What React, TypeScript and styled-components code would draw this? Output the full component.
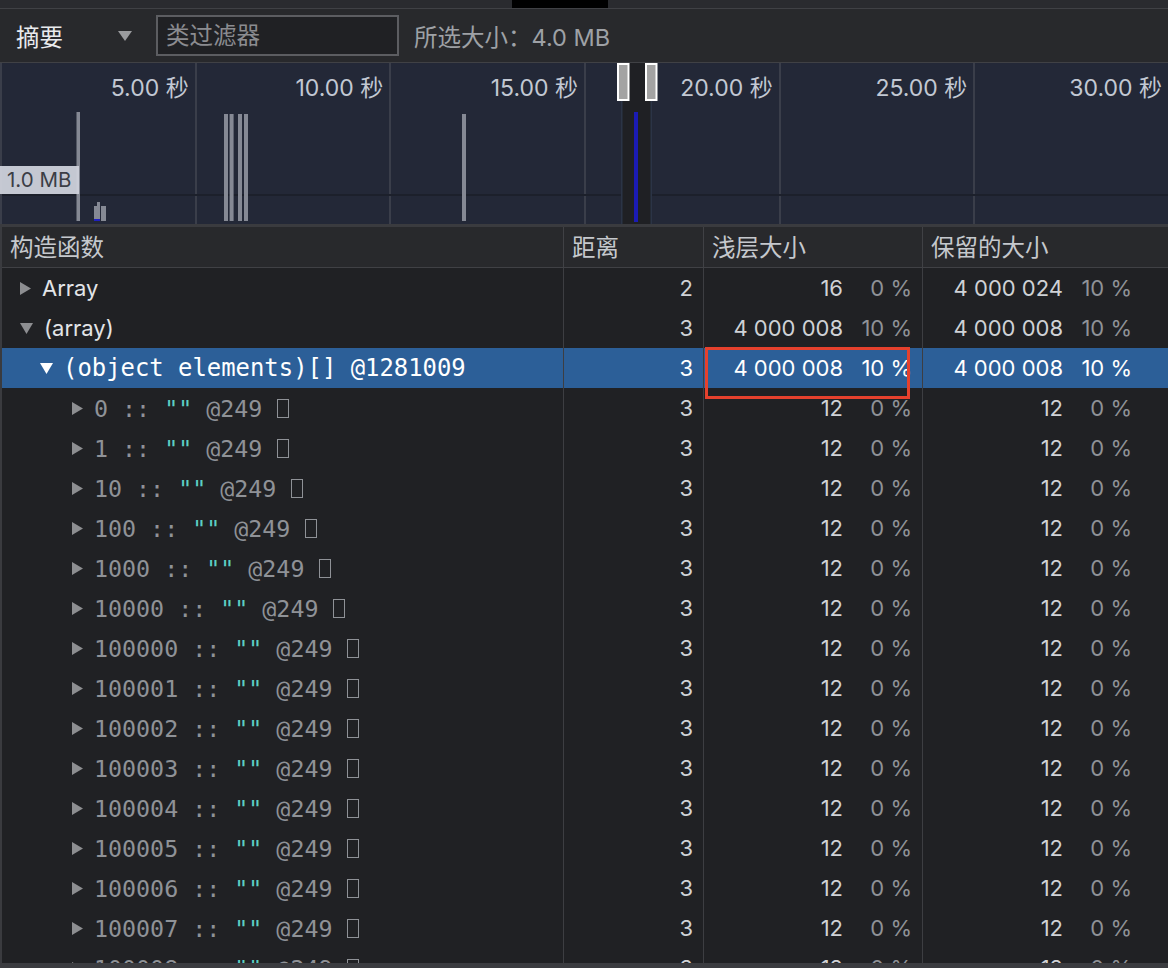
import React from 'react';
import styled, { createGlobalStyle } from 'styled-components';

const GlobalStyle = createGlobalStyle`
  html, body { margin: 0; padding: 0; background: #202124; }
  #root { width: 1168px; height: 968px; }
  * { box-sizing: border-box; }
`;

const SANS = `Inter, "Noto Sans CJK SC", sans-serif`;
const MONO = `"DejaVu Sans Mono", "Liberation Mono", monospace`;

const Page = styled.div`
  width: 1168px;
  height: 968px;
  display: flex;
  flex-direction: column;
  overflow: hidden;
  background: #202124;
  font-family: ${SANS};
`;

const TopStrip = styled.div`
  flex: none;
  height: 9px;
  background: #2a2b2f;
  border-bottom: 1px solid #404145;
  display: flex;
  padding-left: 512px;
`;

const BlackTab = styled.div`
  width: 96px;
  background: #000;
`;

const Toolbar = styled.div`
  flex: none;
  height: 54px;
  display: flex;
  align-items: center;
  padding-left: 16px;
  background: #28292c;
  border-bottom: 1px solid #404145;
`;

const SelectLabel = styled.span`
  font-size: 23.5px;
  color: #e8eaed;
  width: 102px;
`;

const Caret = styled.svg`
  width: 14px;
  height: 10px;
  flex: none;
`;

const FilterInput = styled.input`
  margin-left: 24px;
  width: 243px;
  height: 41px;
  border: 2px solid #5c5d61;
  background: #202124;
  padding: 0 0 0 8px;
  font-family: ${SANS};
  font-size: 23.5px;
  color: #e8eaed;
  outline: none;
  &::placeholder { color: #8b8c90; }
`;

const SizeLabel = styled.span`
  margin-left: 15px;
  font-size: 23.5px;
  color: #9ea1a6;
`;

const Timeline = styled.div`
  flex: none;
  position: relative;
  height: 161px;
  background: #232837;
  display: grid;
  grid-template-columns: repeat(6, 1fr);
  border-bottom: 3px solid #3a3b3f;
  box-sizing: content-box;
`;

const TickCell = styled.div`
  border-left: 2px solid #3a3e4a;
  text-align: right;
  padding: 12px 6px 0 0;
  font-size: 23px;
  line-height: 26px;
  color: #c2c8d3;
`;

const ChartLayer = styled.svg`
  position: absolute;
  left: 0;
  top: 0;
  width: 1168px;
  height: 161px;
`;

const ScaleTag = styled.div`
  position: absolute;
  left: 0;
  top: 103px;
  width: 79px;
  height: 28px;
  padding-left: 7px;
  background: rgba(206, 209, 218, 0.95);
  color: #3b3e46;
  font-size: 20.5px;
  line-height: 28px;
  white-space: nowrap;
`;

const Table = styled.div`
  flex: 1;
  position: relative;
  display: flex;
  flex-direction: column;
  overflow: hidden;
  border-left: 2px solid #3a3b3f;
  background: #202124;
`;

const COLS = `561px 140px 219px 1fr`;

const HeaderRow = styled.div`
  flex: none;
  height: 41px;
  display: grid;
  grid-template-columns: ${COLS};
  background: #28292c;
  border-bottom: 1px solid #404145;
`;

const HeaderCell = styled.div<{ $first?: boolean }>`
  display: flex;
  align-items: center;
  padding: 0 0 3px 8px;
  border-left: ${p => (p.$first ? 'none' : '1px solid #404145')};
  font-size: 23.5px;
  color: #c5c8cd;
`;

const Row = styled.div<{ $selected?: boolean }>`
  flex: none;
  height: 40px;
  display: grid;
  grid-template-columns: ${COLS};
  background: ${p => (p.$selected ? '#2c5f98' : 'transparent')};
`;

const NameCell = styled.div<{ $indent: number }>`
  display: flex;
  align-items: center;
  padding-left: ${p => p.$indent}px;
  white-space: nowrap;
  overflow: hidden;
`;

const Toggle = styled.svg<{ $gap: number }>`
  flex: none;
  margin-right: ${p => p.$gap}px;
`;

const PlainName = styled.span`
  font-size: 22px;
  color: #e3e5e8;
`;

const MonoName = styled.span<{ $selected?: boolean }>`
  font-family: ${MONO};
  font-size: ${p => (p.$selected ? 23.9 : 23.3)}px;
  color: ${p => (p.$selected ? '#ffffff' : '#8f9297')};
  white-space: pre;
  display: flex;
  align-items: center;
`;

const StringLit = styled.span`
  color: #5ccfc3;
`;

const Tofu = styled.span`
  display: inline-block;
  width: 12px;
  height: 19px;
  border: 1.5px solid #8f9297;
  margin-left: 1px;
`;

const NumCell = styled.div<{ $selected?: boolean; $pad: number }>`
  display: flex;
  align-items: center;
  justify-content: flex-end;
  padding-right: ${p => p.$pad}px;
  border-left: 1px solid #3d3e42;
  font-size: 22px;
  color: ${p => (p.$selected ? '#ffffff' : '#cfd2d6')};
  white-space: nowrap;
`;

const Percent = styled.span<{ $selected?: boolean }>`
  width: 69px;
  text-align: right;
  color: ${p => (p.$selected ? '#ffffff' : '#8f9297')};
`;

const Highlight = styled.div`
  position: absolute;
  left: 703px;
  top: 120px;
  width: 205px;
  height: 52px;
  border: 3px solid #e5412d;
  pointer-events: none;
`;

const BottomBar = styled.div`
  flex: none;
  height: 5px;
  background: #3b3c40;
`;

type RowData = {
  level: number;
  expanded: boolean;
  selected?: boolean;
  name?: string;
  key?: string;
  mono?: string;
  dist: string;
  shallow: string;
  sp: string;
  retained: string;
  rp: string;
};

const childKeys = ['0', '1', '10', '100', '1000', '10000', '100000', '100001', '100002', '100003', '100004', '100005', '100006', '100007', '100008'];

const rows: RowData[] = [
  { level: 0, expanded: false, name: 'Array', dist: '2', shallow: '16', sp: '0 %', retained: '4 000 024', rp: '10 %' },
  { level: 0, expanded: true, name: '(array)', dist: '3', shallow: '4 000 008', sp: '10 %', retained: '4 000 008', rp: '10 %' },
  { level: 1, expanded: true, selected: true, mono: '(object elements)[] @1281009', dist: '3', shallow: '4 000 008', sp: '10 %', retained: '4 000 008', rp: '10 %' },
  ...childKeys.map(k => ({ level: 2, expanded: false, key: k, dist: '3', shallow: '12', sp: '0 %', retained: '12', rp: '0 %' })),
];

const indents = [18, 38, 70];
const gaps = [11, 10, 11];

const ToggleIcon: React.FC<{ expanded: boolean; color: string; gap: number }> = ({ expanded, color, gap }) =>
  expanded ? (
    <Toggle $gap={gap} width="13" height="11" viewBox="0 0 13 11">
      <path d="M0 0 L13 0 L6.5 11 Z" fill={color} />
    </Toggle>
  ) : (
    <Toggle $gap={gap} width="11" height="13" viewBox="0 0 11 13">
      <path d="M0 0 L11 6.5 L0 13 Z" fill={color} />
    </Toggle>
  );

const ticks = ['5.00 秒', '10.00 秒', '15.00 秒', '20.00 秒', '25.00 秒', '30.00 秒'];

export default function App() {
  return (
    <Page>
      <GlobalStyle />
      <TopStrip>
        <BlackTab />
      </TopStrip>
      <Toolbar>
        <SelectLabel>摘要</SelectLabel>
        <Caret viewBox="0 0 14 10">
          <path d="M0 0 L14 0 L7 10 Z" fill="#9a9b9e" />
        </Caret>
        <FilterInput placeholder="类过滤器" />
        <SizeLabel>所选大小：4.0 MB</SizeLabel>
      </Toolbar>
      <Timeline>
        {ticks.map(t => (
          <TickCell key={t}>{t}</TickCell>
        ))}
        <ChartLayer viewBox="0 0 1168 161">
          <rect x="2" y="131" width="1166" height="2" fill="#1c202b" />
          <rect x="76.5" y="49" width="3.5" height="109" fill="#858994" />
          <rect x="224" y="51" width="4" height="107" fill="#858994" />
          <rect x="229.6" y="51" width="4" height="107" fill="#858994" />
          <rect x="238" y="51" width="4" height="107" fill="#858994" />
          <rect x="244" y="51" width="4" height="107" fill="#858994" />
          <rect x="462" y="51" width="4" height="107" fill="#858994" />
          <rect x="94" y="143" width="6" height="15" fill="#858994" />
          <rect x="97" y="139" width="3" height="19" fill="#858994" />
          <rect x="101" y="143" width="5" height="15" fill="#858994" />
          <rect x="94" y="156" width="6" height="2" fill="#2020c0" />
          <rect x="621" y="0" width="31" height="161" fill="#2b3446" />
          <rect x="622.5" y="0" width="28" height="161" fill="#1f2024" />
          <rect x="634" y="49" width="4" height="110" fill="#1b1bb4" />
          <rect x="618" y="1" width="10.5" height="36" fill="#a3a3a3" stroke="#ffffff" strokeWidth="2" />
          <rect x="646" y="1" width="10.5" height="36" fill="#a3a3a3" stroke="#ffffff" strokeWidth="2" />
        </ChartLayer>
        <ScaleTag>1.0 MB</ScaleTag>
      </Timeline>
      <Table>
        <HeaderRow>
          <HeaderCell $first>构造函数</HeaderCell>
          <HeaderCell>距离</HeaderCell>
          <HeaderCell>浅层大小</HeaderCell>
          <HeaderCell>保留的大小</HeaderCell>
        </HeaderRow>
        {rows.map((r, i) => (
          <Row key={i} $selected={r.selected}>
            <NameCell $indent={indents[r.level]}>
              <ToggleIcon
                expanded={r.expanded}
                color={r.selected ? '#ffffff' : '#8d8e91'}
                gap={gaps[r.level]}
              />
              {r.name && <PlainName>{r.name}</PlainName>}
              {r.mono && <MonoName $selected>{r.mono}</MonoName>}
              {r.key !== undefined && (
                <MonoName>
                  {r.key} :: <StringLit>""</StringLit> @249 <Tofu />
                </MonoName>
              )}
            </NameCell>
            <NumCell $pad={10} $selected={r.selected}>{r.dist}</NumCell>
            <NumCell $pad={10} $selected={r.selected}>
              {r.shallow}
              <Percent $selected={r.selected}>{r.sp}</Percent>
            </NumCell>
            <NumCell $pad={36} $selected={r.selected}>
              {r.retained}
              <Percent $selected={r.selected}>{r.rp}</Percent>
            </NumCell>
          </Row>
        ))}
        <Highlight />
      </Table>
      <BottomBar />
    </Page>
  );
}
